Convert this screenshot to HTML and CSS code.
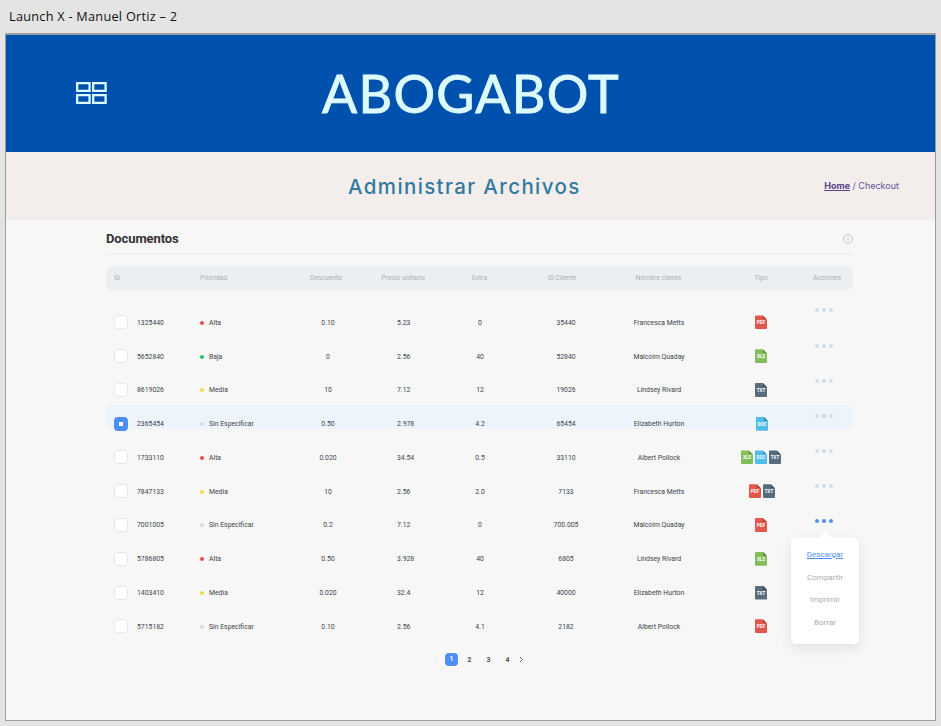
FILE: index.html
```html
<!DOCTYPE html>
<html lang="es">
<head>
<meta charset="utf-8">
<title>Abogabot</title>
<link rel="stylesheet" href="styles.css">
</head>
<body>
<div class="artboard-name">Launch X - Manuel Ortiz – 2</div>
<div class="artboard">
  <header class="top">
    <svg class="menu" width="31" height="22" viewBox="0 0 31 22"><path fill="none" stroke="#dcfbff" stroke-width="2.300" d="M1.150 1.150h12.400v7.700H1.150zM17.200 1.150h12.400v7.700H17.200zM1.150 13.150h12.400v7.700H1.150zM17.200 13.150h12.400v7.700H17.200z"/></svg>
    <div class="brand">ABOGABOT</div>
  </header>
  <div class="sub">
    <h1>Administrar Archivos</h1>
    <nav><a>Home</a> / Checkout</nav>
  </div>
  <main>
    <div class="heading">
      <h2>Documentos</h2>
      <svg width="11" height="11" viewBox="0 0 11 11"><circle cx="6" cy="6" r="4.500" fill="none" stroke="#c8c8c8"/><path stroke="#c8c8c8" d="M6 3.500v1M6 5.200v3.300"/></svg>
    </div>
    <div class="thead"><span>ID</span><span>Prioridad</span><span>Descuento</span><span>Precio unitario</span><span>Extra</span><span>ID Cliente</span><span>Nombre cliente</span><span>Tipo</span><span>Acciones</span></div>
    <div class="tbody">
      <div class="rows">
        <div class="row"><span><i class="check"></i>1325440</span><span><i class="dot alta"></i>Alta</span><span>0.10</span><span>5.23</span><span>0</span><span>35440</span><span>Francesca Metts</span><span><b class="file pdf">PDF</b></span></div>
        <div class="row"><span><i class="check"></i>5652840</span><span><i class="dot baja"></i>Baja</span><span>0</span><span>2.56</span><span>40</span><span>52840</span><span>Malcolm Quaday</span><span><b class="file xls">XLS</b></span></div>
        <div class="row"><span><i class="check"></i>8619026</span><span><i class="dot media"></i>Media</span><span>10</span><span>7.12</span><span>12</span><span>19026</span><span>Lindsey Rivard</span><span><b class="file txt">TXT</b></span></div>
        <div class="row selected"><span><i class="check"></i>2365454</span><span><i class="dot"></i>Sin Especificar</span><span>0.50</span><span>2.978</span><span>4.2</span><span>65454</span><span>Elizabeth Hurton</span><span class="shifted"><b class="file doc">DOC</b></span></div>
        <div class="row"><span><i class="check"></i>1733110</span><span><i class="dot alta"></i>Alta</span><span>0.020</span><span>34.54</span><span>0.5</span><span>33110</span><span>Albert Pollock</span><span><b class="file xls">XLS</b><b class="file doc">DOC</b><b class="file txt">TXT</b></span></div>
        <div class="row"><span><i class="check"></i>7847133</span><span><i class="dot media"></i>Media</span><span>10</span><span>2.56</span><span>2.0</span><span>7133</span><span>Francesca Metts</span><span class="shifted"><b class="file pdf">PDF</b><b class="file txt">TXT</b></span></div>
        <div class="row"><span><i class="check"></i>7001005</span><span><i class="dot"></i>Sin Especificar</span><span>0.2</span><span>7.12</span><span>0</span><span>700.005</span><span>Malcolm Quaday</span><span><b class="file pdf">PDF</b></span></div>
        <div class="row"><span><i class="check"></i>5786805</span><span><i class="dot alta"></i>Alta</span><span>0.50</span><span>3.928</span><span>40</span><span>6805</span><span>Lindsey Rivard</span><span><b class="file xls">XLS</b></span></div>
        <div class="row"><span><i class="check"></i>1403410</span><span><i class="dot media"></i>Media</span><span>0.020</span><span>32.4</span><span>12</span><span>40000</span><span>Elizabeth Hurton</span><span><b class="file txt">TXT</b></span></div>
        <div class="row"><span><i class="check"></i>5715182</span><span><i class="dot"></i>Sin Especificar</span><span>0.10</span><span>2.56</span><span>4.1</span><span>2182</span><span>Albert Pollock</span><span><b class="file pdf">PDF</b></span></div>
      </div>
      <div class="actions">
        <div class="more"><i></i><i></i><i></i></div>
        <div class="more"><i></i><i></i><i></i></div>
        <div class="more"><i></i><i></i><i></i></div>
        <div class="more"><i></i><i></i><i></i></div>
        <div class="more"><i></i><i></i><i></i></div>
        <div class="more"><i></i><i></i><i></i></div>
        <div class="more open"><i></i><i></i><i></i>
          <div class="popup"><a class="active">Descargar</a><a>Compartir</a><a>Imprimir</a><a>Borrar</a></div>
        </div>
      </div>
    </div>
    <div class="pager">
      <svg class="arrow prev" width="5" height="7" viewBox="0 0 5 7"><path d="M3.500 1L1 3.500 3.500 6"/></svg>
      <span class="current">1</span><span>2</span><span>3</span><span>4</span>
      <svg class="arrow next" width="5" height="7" viewBox="0 0 5 7"><path d="M1 1l2.500 2.500L1 6"/></svg>
    </div>
  </main>
</div>
</body>
</html>
```
FILE: styles.css
```css
* { box-sizing: border-box; }
body { margin: 0; height: 726px; overflow: hidden; background: #e4e4e4; font-family: Roboto, sans-serif; }
.artboard-name { height: 33px; padding: 7px 0 0 9px; font: 12.7px/18px "Open Sans", sans-serif; letter-spacing: .27px; color: #111; white-space: nowrap; }
.artboard { margin-left: 5px; width: 931px; height: 688px; border: 1px solid #9d9d9d; border-top-width: 2px; background: #f7f7f7; }
.top { display: grid; grid-template-columns: 316px 1fr; align-items: center; height: 117px; padding-bottom: 2px; background: #0051ad; }
.menu { margin-left: 70px; }
.brand { font: 52px/60px Lato, sans-serif; letter-spacing: 1.3px; -webkit-text-stroke: .9px #dcfbff; color: #dcfbff; white-space: nowrap; }
.sub { display: flex; align-items: center; height: 68px; background: #f3eeeb; padding: 0 36px 0 342px; justify-content: space-between; }
h1 { margin: 2px 0 0; font: 500 20.500px/30px Inter, sans-serif; letter-spacing: 1.380px; color: #327a9f; white-space: nowrap; }
nav { font: 9px/14px Inter, sans-serif; color: #66519a; white-space: nowrap; }
nav a { font-weight: 700; text-decoration: underline; color: #55408a; }
main { width: 747px; margin-left: 100px; }
.heading { display: flex; justify-content: space-between; align-items: center; height: 35px; padding-top: 4px; border-bottom: 2px solid #eaf1f7; }
h2 { margin: 0; font: 700 13px/18px Roboto, sans-serif; letter-spacing: -.1px; color: #333; }
.thead { display: grid; grid-template-columns: 94px 90px 72px 82px 71px 94px 99px 106px 26px; align-items: center; height: 24px; margin-top: 11px; border-radius: 6px; background: #ebeff2; font-size: 6.750px; color: #a9afb4; }
.thead span { display: flex; justify-content: center; white-space: nowrap; }
.thead span:nth-child(1) { justify-content: flex-start; padding-left: 8px; }
.thead span:nth-child(2) { justify-content: flex-start; }
.tbody { display: flex; margin-top: 16px; }
.rows { width: 689px; }
.row { position: relative; display: grid; grid-template-columns: 94px 90px 76px 53px 122px 50px 136px 68px; height: 33.780px; align-items: center; font-size: 6.850px; color: #3d434a; }
.row > span { position: relative; display: flex; align-items: center; justify-content: center; white-space: nowrap; }
.row > span:nth-child(1) { justify-content: flex-start; padding-left: 8px; gap: 9px; }
.row > span:nth-child(2) { justify-content: flex-start; gap: 5px; }
.row > span:nth-child(4) { justify-content: flex-start; padding-left: 31px; }
.row > span:nth-child(8) { gap: 2px; padding-bottom: 1px; }
.row .shifted { padding-left: 2px; }
.selected::before { content: ""; position: absolute; left: 0; top: -2px; width: 747px; height: 24px; border-radius: 5px; background: #eef4fc; }
.check { width: 14px; height: 14px; margin-top: -1px; border: 1px solid #e3e8f0; border-radius: 4px; background: #fff; }
.selected .check { border: 5px solid #4d8ef7; }
.dot { width: 4px; height: 4px; border-radius: 50%; background: #d3dce6; }
.alta { background: #f04a4e; }
.baja { background: #1fc36a; }
.media { background: #f5da4a; }
.file { width: 12px; height: 14px; padding-top: 5px; border-radius: 1px; color: #fff; font-size: 4.500px; line-height: 6px; text-align: center; clip-path: polygon(0 0, 8px 0, 12px 4px, 12px 14px, 0 14px); background-image: linear-gradient(45deg, rgba(0, 0, 0, .25) 50%, transparent 50%); background-size: 4px 4px; background-position: 8px 0; background-repeat: no-repeat; }
.pdf { background-color: #e2574c; }
.xls { background-color: #84bd5a; }
.txt { background-color: #576d7e; }
.doc { background-color: #50bee8; }
.actions { width: 58px; margin-top: -14px; }
.more { position: relative; display: flex; align-items: center; justify-content: center; gap: 3px; height: 35px; }
.more:first-child { margin-bottom: 1px; }
.more i { width: 4px; height: 4px; border-radius: 50%; background: #d1dceb; }
.open i { background: #4d8ef7; }
.popup { position: absolute; z-index: 1; left: -4px; top: 35px; width: 68px; height: 106px; padding-top: 6px; border-radius: 5px; background: #fff; box-shadow: 0 4px 12px rgba(60, 80, 110, .13); text-align: center; font-size: 8px; line-height: 22.500px; color: #a8adb3; }
.popup::before { content: ""; position: absolute; left: 27px; top: -7px; border: 7px solid transparent; border-top: 0; border-bottom-color: #fff; }
.popup a { display: block; }
.popup .active { color: #4d8ef7; text-decoration: underline; }
.pager { display: flex; align-items: center; height: 14px; margin: 9px 0 0 328px; font-size: 6.750px; font-weight: 700; color: #4c5157; }
.pager span { width: 19px; text-align: center; }
.pager .current { width: 13px; height: 13px; margin: 0 2px 0 6px; border-radius: 4px; background: #4d8ef7; color: #fff; line-height: 13px; }
.arrow { fill: none; stroke: #5c6167; }
.next { margin-left: 2px; }
.prev { stroke: #dfe3e7; }
```
